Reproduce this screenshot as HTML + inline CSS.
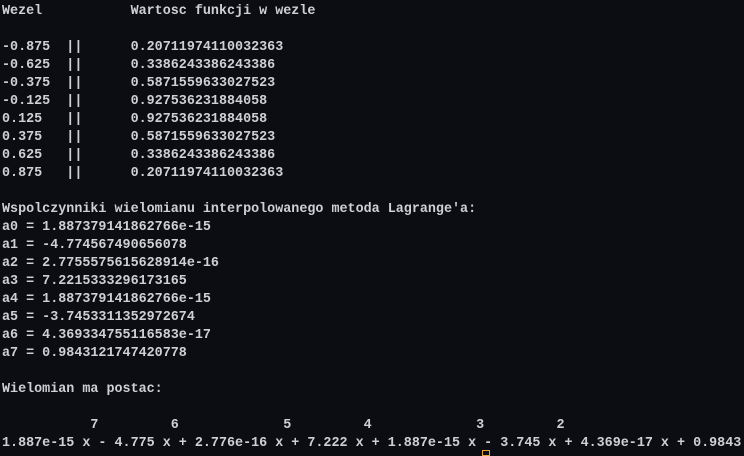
<!DOCTYPE html>
<html><head><meta charset="utf-8"><style>
html,body{margin:0;padding:0;background:#0c0d12;width:744px;height:454px;overflow:hidden}
pre{margin:0;position:absolute;left:2px;top:3px;font-family:"Liberation Mono",monospace;font-size:13.4px;line-height:18px;font-weight:bold;color:#cfd0d4;white-space:pre}
.cur{position:absolute;left:482px;top:450px;width:8px;height:6px;border:1px solid #e8a33a;box-sizing:border-box}
</style></head><body>
<pre>Wezel           Wartosc funkcji w wezle

-0.875  ||      0.20711974110032363
-0.625  ||      0.3386243386243386
-0.375  ||      0.5871559633027523
-0.125  ||      0.927536231884058
0.125   ||      0.927536231884058
0.375   ||      0.5871559633027523
0.625   ||      0.3386243386243386
0.875   ||      0.20711974110032363

Wspolczynniki wielomianu interpolowanego metoda Lagrange'a:
a0 = 1.887379141862766e-15
a1 = -4.774567490656078
a2 = 2.7755575615628914e-16
a3 = 7.2215333296173165
a4 = 1.887379141862766e-15
a5 = -3.7453311352972674
a6 = 4.369334755116583e-17
a7 = 0.9843121747420778

Wielomian ma postac:

           7         6             5         4             3         2
1.887e-15 x - 4.775 x + 2.776e-16 x + 7.222 x + 1.887e-15 x - 3.745 x + 4.369e-17 x + 0.9843</pre>
<div class="cur"></div>
</body></html>
